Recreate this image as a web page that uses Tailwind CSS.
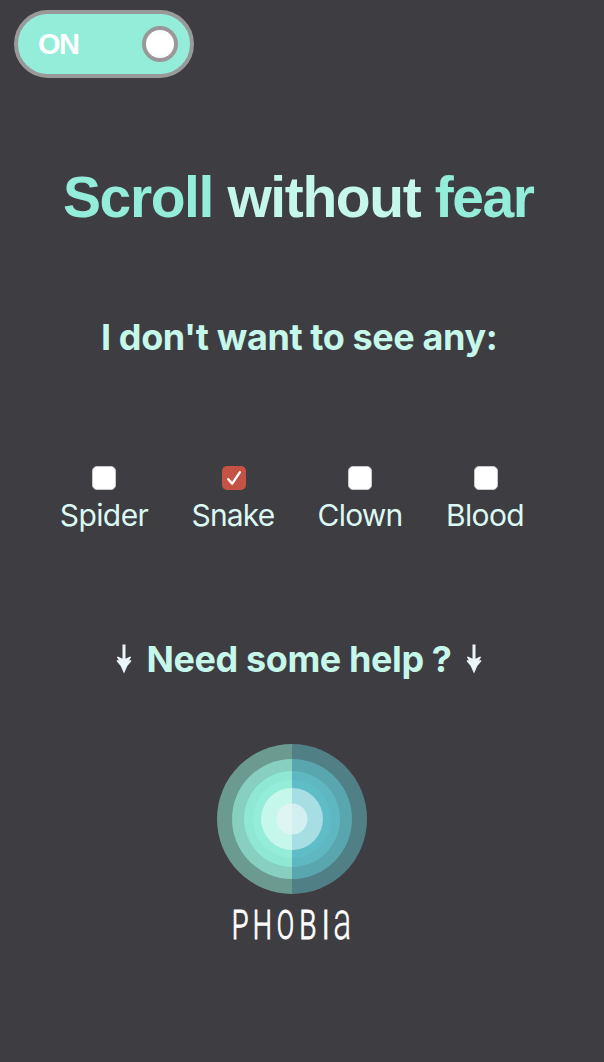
<!DOCTYPE html>
<html lang="en">
<head>
<meta charset="utf-8">
<title>Phobia</title>
<script src="https://cdn.jsdelivr.net/npm/@tailwindcss/browser@4"></script>
</head>
<body class="h-[1062px] w-[604px] overflow-hidden bg-[#3e3d42] font-['Inter',sans-serif] text-[#c5f7ea]">
<main class="flex flex-col">
  <button class="mt-[10px] ml-[14px] flex h-[68px] w-[180px] items-center justify-between rounded-full border-4 border-[#999] bg-[#93edd9] pr-3 pl-5 font-['Liberation_Sans',sans-serif] text-[29px] font-bold text-white">
    <span class="pt-0.5 tracking-[-1.5px]">ON</span>
    <span class="size-9 rounded-full border-4 border-[#999] bg-white"></span>
  </button>
  <h1 class="mt-[87px] ml-[63px] h-16 font-['Liberation_Sans',sans-serif] text-[57px] leading-[64px] font-bold whitespace-nowrap tracking-[-1.4px]"><span class="text-[#93edd9]">Scroll</span> without <span class="text-[#93edd9]">fear</span></h1>
  <h2 class="mt-[86px] ml-[101px] h-11 text-[36px] leading-[44px] font-bold whitespace-nowrap tracking-[-0.4px]">I don't want to see any:</h2>
  <div class="mt-[107px] ml-[60px] flex gap-[44px] text-[30px] leading-9 text-[#dcf8f3]">
    <label class="flex w-[88px] flex-col items-center gap-[7px]"><span class="size-6 rounded-[5px] border border-[#c8c8c8] bg-white"></span><span class="whitespace-nowrap tracking-[-0.6px]">Spider</span></label>
    <label class="flex w-[84px] flex-col items-center gap-[7px]"><span class="size-6 rounded-[5px] bg-[#c45345]"><svg viewBox="0 0 24 24" class="size-6" fill="none" stroke="white" stroke-width="2.4" stroke-linecap="round" stroke-linejoin="round"><path d="M6.3 13.2 10.2 17.6 17.8 6.3"/></svg></span><span class="-ml-0.5 whitespace-nowrap tracking-[-0.8px]">Snake</span></label>
    <label class="-ml-0.5 flex w-[84px] flex-col items-center gap-[7px]"><span class="size-6 rounded-[5px] border border-[#c8c8c8] bg-white"></span><span class="whitespace-nowrap tracking-[-0.8px]">Clown</span></label>
    <label class="flex w-[80px] flex-col items-center gap-[7px]"><span class="size-6 rounded-[5px] border border-[#c8c8c8] bg-white"></span><span class="-ml-0.5 whitespace-nowrap tracking-[-0.6px]">Blood</span></label>
  </div>
  <div class="mt-[104px] ml-[116px] flex h-11 w-[366px] items-center justify-between">
    <svg viewBox="0 -.5 16 30" class="h-[30px] w-4"><path fill="#eaf6fa" d="M6.5 0h3v14.2l4.7-2.2.9.4-2 3.8 2-.7.2 1.2-4 4.9L8 29 4.7 21.6.7 16.7l.2-1.2 2 .7-2-3.8.9-.4 4.7 2.2z"/></svg>
    <h2 class="text-[36px] leading-[44px] font-bold whitespace-nowrap tracking-[-0.4px]">Need some help ?</h2>
    <svg viewBox="0 -.5 16 30" class="h-[30px] w-4"><path fill="#eaf6fa" d="M6.5 0h3v14.2l4.7-2.2.9.4-2 3.8 2-.7.2 1.2-4 4.9L8 29 4.7 21.6.7 16.7l.2-1.2 2 .7-2-3.8.9-.4 4.7 2.2z"/></svg>
  </div>
  <svg viewBox="0 0 150 150" class="mt-[63px] ml-[217px] size-[150px]">
    <defs>
      <clipPath id="l"><path d="M0 0h75v150H0z"/></clipPath>
      <clipPath id="r"><path d="M75 0h75v150H75z"/></clipPath>
    </defs>
    <g clip-path="url(#l)">
      <circle cx="75" cy="75" r="75" fill="#6b9a90"/><circle cx="75" cy="75" r="60" fill="#87cfbe"/><circle cx="75" cy="75" r="48" fill="#8fe8d4"/><circle cx="75" cy="75" r="39" fill="#93edd9"/><circle cx="75" cy="75" r="31" fill="#c5f7ea"/><circle cx="75" cy="75" r="15.5" fill="#dff5f3"/>
    </g>
    <g clip-path="url(#r)">
      <circle cx="75" cy="75" r="75" fill="#508086"/><circle cx="75" cy="75" r="60" fill="#59a6af"/><circle cx="75" cy="75" r="48" fill="#5fb7c1"/><circle cx="75" cy="75" r="39" fill="#5fbdc7"/><circle cx="75" cy="75" r="31" fill="#a6dee3"/><circle cx="75" cy="75" r="15.5" fill="#d2f0f1"/>
    </g>
  </svg>
  <svg viewBox="0 0 150 60" class="ml-[217px] h-[60px] w-[150px] overflow-visible" fill="white" stroke="white" stroke-width="1.1" font-family="Roboto, sans-serif" font-weight="300" font-size="40">
    <text transform="translate(14.7 44.5) scale(.68 1)">P</text>
    <text transform="translate(35.7 44.5) scale(.68 1)">H</text>
    <text transform="translate(59.7 44.5) scale(.64 1)">O</text>
    <text transform="translate(82.3 44.5) scale(.7 1)">B</text>
    <text transform="translate(104.5 44.5) scale(.8 1)">I</text>
    <text transform="translate(116.3 44.5) scale(.84 1.31)" stroke-width=".3">a</text>
  </svg>
</main>
</body>
</html>
